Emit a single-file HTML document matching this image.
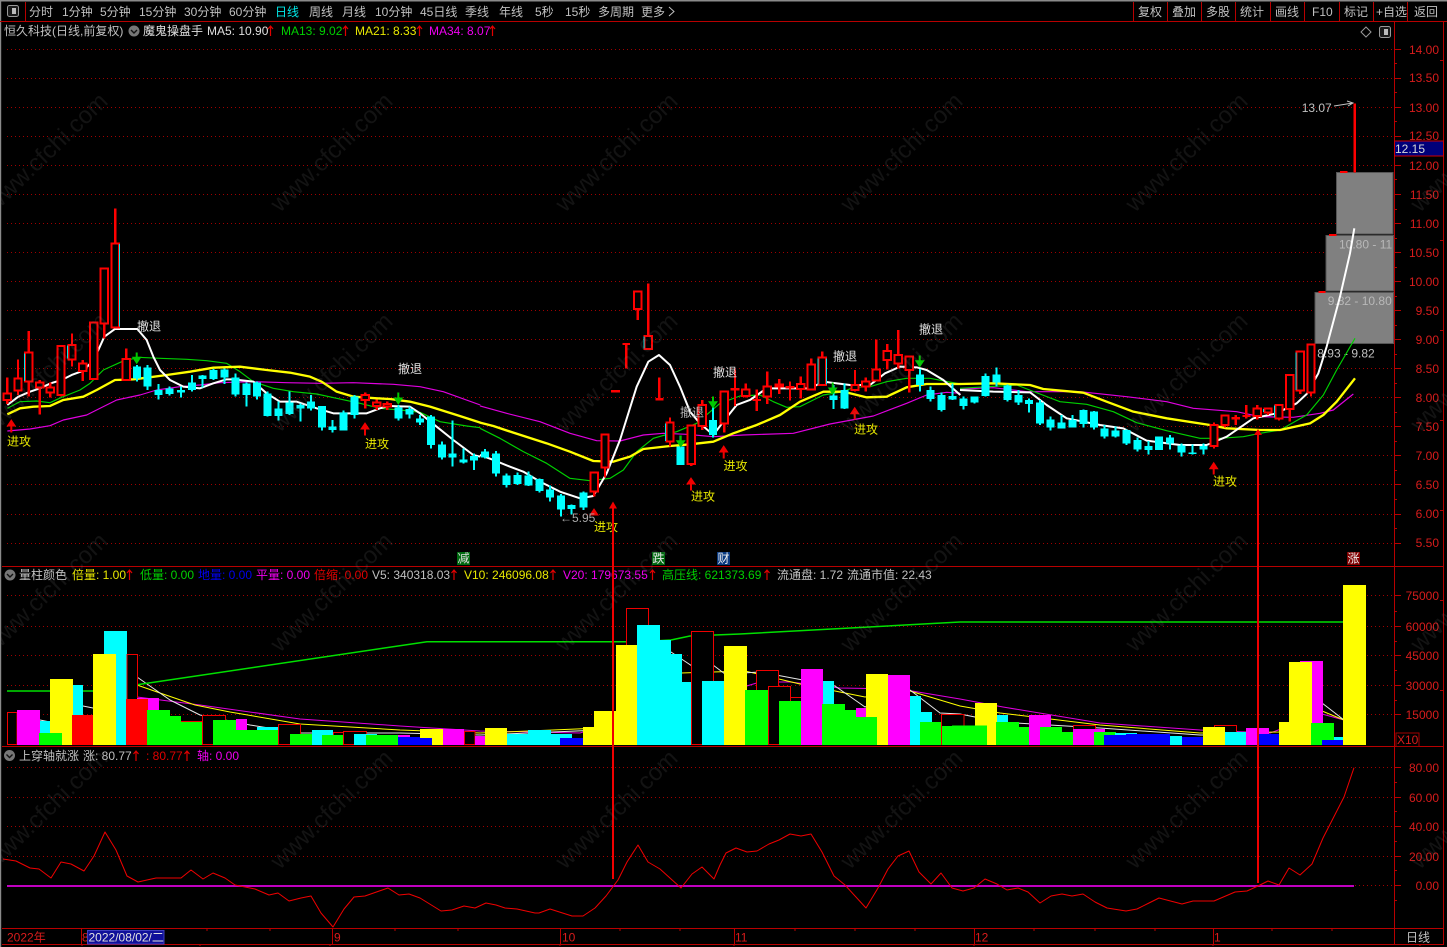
<!DOCTYPE html>
<html lang="zh"><head><meta charset="utf-8"><title>恒久科技 日线</title>
<style>
html,body{margin:0;padding:0;background:#000;width:1447px;height:947px;overflow:hidden}
svg{display:block}
text{font-family:"Liberation Sans","Noto Sans CJK SC",sans-serif;font-size:12px}
.g{fill:#c0c0c0}.w{fill:#e0e0e0}.y{fill:#e8e800}.gr{fill:#00d000}.m{fill:#f000f0}.b{fill:#0000f0}.r{fill:#e00000}.c{fill:#00e8e8}
.ax text,.ax{fill:#d81c1c}
.gd{stroke:#a00000;stroke-dasharray:1 3;fill:none;shape-rendering:crispEdges}
.fr{stroke:#b80000;fill:none;shape-rendering:crispEdges}
.cd path{shape-rendering:crispEdges}
.wk{fill:none;stroke:#00ffff;stroke-width:6}
.bd{fill:none;stroke:#00ffff;stroke-width:24}
.rw{fill:none;stroke:#ff0000;stroke-width:7}
.rb{fill:#000;stroke:#ff0000;stroke-width:6}
.ce{fill:none;stroke:#00e8e8;stroke-width:3}
.ln{fill:none;stroke-linejoin:round}
.bar path{shape-rendering:crispEdges}
.H{fill:#000;stroke:#f00000;stroke-width:1}.Y{fill:#ff0}.C{fill:#0ff}.M{fill:#f0f}.G{fill:#0f0}.B{fill:#00f}.R{fill:#f00}
.ar{fill:#f00000;stroke:#f00000;stroke-width:1}
.ga{fill:#00c800;stroke:#00c800;stroke-width:1}
.sa{stroke:#e00000;fill:none;stroke-width:1.2}
.wm{font-size:24px;fill:rgba(128,128,128,.15)}
</style></head><body>
<svg width="1447" height="947" viewBox="0 0 1447 947" xmlns="http://www.w3.org/2000/svg">
<rect width="1447" height="947" fill="#000"/>
<!-- frame -->
<rect x="0" y="0" width="1447" height="1.5" fill="#8a8a8a"/>
<rect x="0" y="0" width="1.2" height="947" fill="#8a8a8a"/>
<path class="fr" d="M0 21.5H1447M25.5 2V21M1133.5 2V21M1167.5 2V21M1201.5 2V21M1235.5 2V21M1270.5 2V21M1304.5 2V21M1339.5 2V21M1373.5 2V21M1407.5 2V21"/>
<path class="fr" stroke-width="1" d="M1394.5 21V944M1443.5 21V944M2 566.5H1444M2 746.5H1444M2 928.5H1444M2 944.5H1444"/>
<!-- toolbar -->
<rect x="7.5" y="5.5" width="11" height="11" rx="2" fill="#1a1a1a" stroke="#999"/><rect x="12" y="8" width="4" height="6" fill="#bbb"/>
<g class="g">
<text x="29" y="16">分时</text><text x="62" y="16">1分钟</text><text x="100" y="16">5分钟</text><text x="139" y="16">15分钟</text><text x="184" y="16">30分钟</text><text x="229" y="16">60分钟</text>
<text x="275" y="16" class="c">日线</text><text x="309" y="16">周线</text><text x="342" y="16">月线</text><text x="375" y="16">10分钟</text><text x="420" y="16">45日线</text><text x="465" y="16">季线</text><text x="499" y="16">年线</text><text x="535" y="16">5秒</text><text x="565" y="16">15秒</text><text x="598" y="16">多周期</text><text x="641" y="16">更多</text>
<text x="1138" y="16">复权</text><text x="1172" y="16">叠加</text><text x="1206" y="16">多股</text><text x="1240" y="16">统计</text><text x="1275" y="16">画线</text><text x="1312" y="16">F10</text><text x="1344" y="16">标记</text><text x="1376" y="16">+自选</text><text x="1414" y="16">返回</text>
</g>
<path d="M669 7l5 4.5-5 4.5" fill="none" stroke="#c0c0c0"/>
<!-- info row -->
<text x="4" y="35" class="g">恒久科技(日线,前复权)</text>
<circle cx="134" cy="31" r="5.5" fill="#777"/><path d="M131 30l3 3 3-3" fill="none" stroke="#111" stroke-width="1.4"/>
<text x="143" y="35" class="w">魔鬼操盘手</text>
<text x="207" y="35" class="w">MA5: 10.90</text><text x="281" y="35" class="gr">MA13: 9.02</text><text x="355" y="35" class="y">MA21: 8.33</text><text x="429" y="35" class="m">MA34: 8.07</text>
<path class="sa" d="M270.500 36V26M268 29l2.500-3 2.500 3M345.500 36V26M343 29l2.500-3 2.500 3M419.500 36V26M417 29l2.500-3 2.500 3M492.500 36V26M490 29l2.500-3 2.500 3"/>
<path d="M1366 27l5 5-5 5-5-5z" fill="none" stroke="#999"/>
<rect x="1379.500" y="26.500" width="11" height="11" rx="2" fill="#1a1a1a" stroke="#999"/><rect x="1384" y="29" width="4" height="6" fill="#bbb"/>
<!-- grids -->
<path class="gd" d="M7 49.500H1394M7 78.500H1394M7 107.500H1394M7 136.500H1394M7 165.500H1394M7 194.500H1394M7 223.500H1394M7 252.500H1394M7 281.500H1394M7 310.500H1394M7 339.500H1394M7 368.500H1394M7 397.500H1394M7 426.500H1394M7 455.500H1394M7 484.500H1394M7 514.500H1394M7 543.500H1394"/>
<path class="gd" d="M7 595.500H1394M7 626.500H1394M7 655.500H1394M7 685.500H1394M7 714.500H1394"/>
<path class="gd" d="M7 767.500H1394M7 797.500H1394M7 826.500H1394M7 856.500H1394M7 885.500H1394"/>
<!-- axis ticks -->
<path class="fr" d="M1394 49.500h7M1394 63.500h3M1394 78.500h7M1394 92.500h3M1394 107.500h7M1394 121.500h3M1394 136.500h7M1394 150.500h3M1394 165.500h7M1394 179.500h3M1394 194.500h7M1394 209.500h3M1394 223.500h7M1394 238.500h3M1394 252.500h7M1394 267.500h3M1394 281.500h7M1394 296.500h3M1394 310.500h7M1394 325.500h3M1394 339.500h7M1394 354.500h3M1394 368.500h7M1394 383.500h3M1394 397.500h7M1394 412.500h3M1394 426.500h7M1394 441.500h3M1394 455.500h7M1394 470.500h3M1394 484.500h7M1394 499.500h3M1394 514.500h7M1394 528.500h3M1394 543.500h7M1394 595.500h7M1394 611.500h3M1394 626.500h7M1394 641.500h3M1394 655.500h7M1394 670.500h3M1394 685.500h7M1394 700.500h3M1394 714.500h7M1394 767.500h7M1394 782.500h3M1394 797.500h7M1394 811.500h3M1394 826.500h7M1394 841.500h3M1394 856.500h7M1394 870.500h3M1394 885.500h7M1394 900.500h3M1440 60.500h3M1440 150.500h3M1440 240.500h3M1440 330.500h3M1440 420.500h3M1440 510.500h3M1440 600.500h3M1440 690.500h3"/>
<g class="ax" text-anchor="end">
<text x="1439" y="54">14.00</text><text x="1439" y="82">13.50</text><text x="1439" y="112">13.00</text><text x="1439" y="140">12.50</text><text x="1439" y="170">12.00</text><text x="1439" y="199">11.50</text><text x="1439" y="228">11.00</text><text x="1439" y="257">10.50</text><text x="1439" y="286">10.00</text><text x="1439" y="315">9.50</text><text x="1439" y="344">9.00</text><text x="1439" y="373">8.50</text><text x="1439" y="402">8.00</text><text x="1439" y="431">7.50</text><text x="1439" y="460">7.00</text><text x="1439" y="489">6.50</text><text x="1439" y="518">6.00</text><text x="1439" y="547">5.50</text>
<text x="1439" y="600">75000</text><text x="1439" y="631">60000</text><text x="1439" y="660">45000</text><text x="1439" y="690">30000</text><text x="1439" y="719">15000</text>
<text x="1439" y="772">80.00</text><text x="1439" y="802">60.00</text><text x="1439" y="831">40.00</text><text x="1439" y="861">20.00</text><text x="1439" y="890">0.00</text>
</g>
<rect x="1394.500" y="141" width="49" height="15" fill="#00007a" stroke="#d00000"/>
<text x="1395" y="153" fill="#d8d8d8">12.15</text>
<rect x="1396" y="733" width="23" height="13.500" fill="#000" stroke="#a00000"/><text x="1397" y="744" class="ax">X10</text>
<!-- gray boxes -->
<rect x="1315" y="292.500" width="78.500" height="51" fill="#808080" stroke="#555"/>
<rect x="1326" y="235.500" width="67.500" height="55.500" fill="#808080" stroke="#555"/>
<rect x="1336.500" y="172.500" width="56.500" height="61.500" fill="#808080" stroke="#555"/>
<text x="1339" y="248.500" fill="#b8b8b8">10.80 - 11</text>
<text x="1327.700" y="305" fill="#b8b8b8">9.82 - 10.80</text>
<text x="1317.300" y="357.500" class="g">8.93 - 9.82</text>
<!-- MA lines -->
<g class="ln" transform="translate(0,200) scale(.33333)">
<polyline stroke="#e000e0" stroke-width="3.500" fill="none" points="22,693 90,687 150,677 190,660 260,645 310,620 350,600 420,585 470,570 540,560 600,555 660,548 760,545 860,548 960,550 1060,548 1180,553 1260,560 1330,575 1441,615"/>
<polyline stroke="#00d000" stroke-width="3.500" fill="none" points="22,625 60,605 110,603 150,608 185,592 240,570 270,550 310,510 365,485 415,472 480,475 560,478 620,482 680,490 720,515 760,545 820,565 880,575 950,582 1010,595 1080,610 1140,625 1200,630 1260,637 1320,665 1400,678 1441,683"/>
<polyline stroke="#ffff00" stroke-width="7" fill="none" points="22,643 60,625 100,620 150,618 190,600 250,590 290,570 345,540 400,538 440,533 500,525 570,515 640,503 720,500 800,510 870,518 930,530 965,545 1010,575 1060,590 1130,595 1170,597 1230,605 1290,620 1370,645 1441,668"/>
<polyline stroke="#ffffff" stroke-width="6" fill="none" points="22,615 55,590 90,575 120,565 152,550 185,540 215,525 250,512 281,480 295,450 313,410 345,387 412,387 440,420 460,470 480,510 510,540 550,560 600,565 640,550 680,538 700,538 760,545 800,580 840,605 890,605 950,625 1000,640 1030,640 1100,640 1140,625 1165,618 1230,620 1260,640 1310,680 1360,720 1420,765 1441,770"/>
</g>
<g class="ln" transform="translate(480,270) scale(.33333)">
<polyline stroke="#e000e0" stroke-width="3.500" fill="none" points="0,408 80,430 180,455 270,490 350,512 420,513 490,495 550,490 620,493 700,500 790,495 940,490 1050,462 1180,438 1280,400 1340,375 1400,367 1441,370"/>
<polyline stroke="#00d000" stroke-width="3.500" fill="none" points="0,475 60,505 130,545 200,580 270,625 330,632 390,625 430,600 470,545 520,505 590,485 650,460 720,400 780,378 840,375 880,395 920,412 960,410 1030,375 1090,365 1120,352 1170,350 1220,335 1280,325 1350,325 1441,342"/>
<polyline stroke="#ffff00" stroke-width="7" fill="none" points="0,458 40,468 100,488 200,520 270,545 340,573 400,575 450,560 490,537 570,528 630,523 700,515 760,490 830,465 900,435 960,395 1030,365 1090,365 1160,382 1220,380 1280,352 1340,342 1441,342"/>
<polyline stroke="#ffffff" stroke-width="6" fill="none" points="0,555 40,570 90,590 130,605 180,635 240,665 300,685 340,678 380,610 420,510 470,350 505,275 537,255 570,285 600,350 630,425 660,460 700,495 730,455 770,405 810,390 860,355 900,355 990,355 1030,335 1110,345 1170,345 1215,310 1260,290 1310,292 1340,300 1390,330 1441,375"/>
</g>
<g class="ln" transform="translate(960,90) scale(.33333)">
<polyline stroke="#e000e0" stroke-width="3.500" fill="none" points="0,897 100,893 200,905 360,905 500,920 620,935 700,955 830,965 900,980 1000,982 1080,970 1120,960 1180,912"/>
<polyline stroke="#00d000" stroke-width="3.500" fill="none" points="0,895 170,885 240,912 300,935 380,943 460,965 530,998 620,1022 720,1045 780,1045 850,1040 900,1030 960,1020 1040,975 1090,915 1130,840 1185,745"/>
<polyline stroke="#ffff00" stroke-width="7" fill="none" points="0,882 100,880 210,885 250,897 370,908 440,935 520,965 620,985 750,1005 800,1015 900,1020 960,1020 1050,1000 1090,975 1130,935 1185,865"/>
<polyline stroke="#ffffff" stroke-width="6" fill="none" points="0,900 100,905 210,907 260,945 320,985 420,1005 490,1015 560,1052 660,1065 740,1065 800,1040 880,985 950,970 1010,940 1040,912 1075,850 1100,770 1140,620 1170,490 1183,415"/>
</g>
<!-- candles -->
<g class="cd" transform="translate(0,200) scale(.33333)">
<path class="wk" d="M411 495V545M443 495V570M476 552V598M508 560V587M543 560V593M576 525V575M608 525V562M641 507V540M673 505V552M706 520V590M739 548V620M771 545V598M803 575V650M836 605V662M868 575V645M901 610V665M933 585V632M966 618V692M998 660V698M1031 632V692M1063 585V655M1196 615V662M1228 620V655M1260 645V675M1293 645V745M1326 725V778M1358 662V800M1390 745V790M1422 760V810"/>
<path class="bd" d="M411 500V535M443 502V560M476 570V585M508 565V582M543 570V578M576 548V570M608 527V537M641 510V537M673 508V532M706 532V583M739 550V585M771 548V590M803 580V648M836 625V648M868 608V642M901 615V625M933 605V625M966 618V683M998 680V690M1031 637V692M1063 590V645M1196 622V655M1228 627V643M1260 655V667M1293 650V735M1326 733V772M1358 760V772M1390 778V788M1422 768V782"/>
<path class="rw" d="M22 532V612M54 478V585M86 393V590M119 540V643M151 547V592M183 437V590M216 400V500M248 480V543M313 205V415M346 25V382M379 445V540M1096 578V625M1130 598V630M1162 605V630"/>
<path class="rb" d="M22 580m-11 0h22V600h-22zM54 535m-11 0h22V572h-22zM86 458m-11 0h22V545h-22zM119 548m-11 0h22V562h-22zM151 563m-11 0h22V578h-22zM183 438m-11 0h22V585h-22zM216 435m-11 0h22V478h-22zM248 490m-11 0h22V513h-22zM281 367m-11 0h22V537h-22zM313 205m-11 0h22V370h-22zM346 130m-11 0h22V382h-22zM379 477m-11 0h22V540h-22zM1096 585m-11 0h22V600h-22zM1130 608m-11 0h22V618h-22zM1162 612m-11 0h22V620h-22z"/>
<path class="ce" d="M86 460m-13 0V543M216 437m-13 0V476M346 132m13 0V380"/>
</g>
<g class="cd" transform="translate(480,270) scale(.33333)">
<path class="wk" d="M15 537V565M48 543V620M80 610V652M113 607V645M146 605V648M178 625V667M210 647V695M243 672V740M275 703V733M310 665V720M602 497V585M699 410V503M1060 345V417M1093 340V417M1320 297V365M1352 350V395M1385 368V424M1417 340V390"/>
<path class="bd" d="M15 545V562M48 550V610M80 617V645M113 615V642M146 617V647M178 627V663M210 658V682M243 677V718M275 705V717M310 668V712M602 530V585M699 450V495M1060 377V390M1093 360V415M1320 313V345M1352 360V387M1385 375V420M1417 378V388"/>
<path class="rw" d="M343 607V680M375 493V622M473 65V150M505 40V200M570 443V530M634 467V588M667 390V480M733 365V487M765 298V408M797 340V383M830 358V423M862 305V402M898 327V372M930 335V392M962 320V385M994 265V362M1027 245V347M1125 300V365M1157 322V365M1189 208V335M1222 222V298M1255 180V295M1288 260V368M439 222V295M538 322V390"/>
<path class="rw" stroke-width="5" d="M393 364H420M427 222H450M527 388H550M752 358H778M817 390H843M917 352H943"/>
<path class="rb" d="M343 607m-11 0h22V665h-22zM375 493m-11 0h22V592h-22zM473 65m-11 0h22V117h-22zM505 198m-11 0h22V237h-22zM570 458m-11 0h22V515h-22zM634 467m-11 0h22V582h-22zM667 405m-11 0h22V468h-22zM733 365m-11 0h22V460h-22zM797 358m-11 0h22V378h-22zM862 350m-11 0h22V380h-22zM898 343m-11 0h22V350h-22zM962 342m-11 0h22V357h-22zM994 283m-11 0h22V358h-22zM1027 263m-11 0h22V345h-22zM1125 345m-11 0h22V360h-22zM1157 335m-11 0h22V350h-22zM1189 298m-11 0h22V332h-22zM1222 243m-11 0h22V270h-22zM1255 255m-11 0h22V280h-22zM1288 260m-11 0h22V300h-22z"/>
<path class="ce" d="M505 200m-13 0V235M570 460m-13 0V513M1027 265m-13 0V343M1027 265m13 0V343"/>
</g>
<g class="cd" transform="translate(960,90) scale(.33333)">
<path class="wk" d="M10 920V958M44 920V940M77 850V920M110 832V890M142 883V935M175 900V945M207 925V968M240 930V1005M272 980V1022M305 975V1015M337 975V1013M370 958V1012M402 963V1018M434 1005V1045M467 1010V1042M500 1018V1065M532 1043V1085M565 1053V1094M630 1035V1078M664 1060V1100M697 1063V1093M730 1060V1093"/>
<path class="bd" d="M10 925V948M44 920V938M77 858V918M110 853V878M142 887V930M175 915V937M207 930V942M240 937V1000M272 988V1012M305 998V1015M337 990V1012M370 960V1002M402 965V1012M434 1015V1040M467 1022V1040M500 1020V1060M532 1050V1078M565 1068V1080M597 1040V1080M630 1043V1060M664 1067V1088M697 1088V1092M730 1068V1078"/>
<path class="rw" d="M762 997V1075M795 977V1012M827 975V1005M859 945V985M892 945V988M924 952V975M957 945V992M989 855V995M1021 785V912M1053 763V920M1184 40V247"/>
<path class="rw" stroke-width="5" d="M815 985H840M848 978H872M1075 606H1097M1107 435H1130M1140 246H1162"/>
<path class="rb" d="M762 1005m-11 0h22V1068h-22zM795 977m-11 0h22V1005h-22zM892 955m-11 0h22V978h-22zM924 955m-11 0h22V968h-22zM957 945m-11 0h22V985h-22zM989 855m-11 0h22V957h-22zM1021 785m-11 0h22V902h-22zM1053 763m-11 0h22V908h-22z"/>
<path class="ce" d="M924 957m-13 0V966M957 947m-13 0V983M1021 787m-13 0V900"/>
</g>
<!-- signals -->
<g class="y"><text x="7" y="445.500">进攻</text><text x="365" y="448">进攻</text><text x="594" y="531">进攻</text><text x="691" y="500.500">进攻</text><text x="723.500" y="470">进攻</text><text x="854" y="433.500">进攻</text><text x="1213" y="485.500">进攻</text></g>
<g class="w"><text x="137" y="330.500">撤退</text><text x="398" y="373">撤退</text><text x="713" y="376.500">撤退</text><text x="680" y="416.500" style="fill:#bbb">撤退</text><text x="833" y="360.500">撤退</text><text x="919" y="333.500">撤退</text></g>
<path class="ar" d="M11.300 420l-4 6h8zM10.800 425h1v7h-1zM365 423l-4 6h8zM364.500 428h1v7h-1zM594 509l-4 6h8zM691 478l-4 6h8zM690.500 483h1v7h-1zM723.700 446l-4 6h8zM723.200 451h1v7h-1zM854.700 407.700l-4 6h8zM854.200 412h1v7h-1zM1213.700 462.700l-4 6h8zM1213.200 467h1v7h-1z"/>
<path class="ga" d="M136.700 363.300l-4-6h8zM136.200 353h1v6h-1zM398.300 404l-4-6h8zM397.800 393h1v6h-1zM680.700 446.700l-4-6h8zM680.200 436h1v6h-1zM713 407.700l-4-6h8zM712.500 397h1v6h-1zM832.700 394l-4-6h8zM832.200 383h1v6h-1zM919.700 366.700l-4-6h8zM919.200 356h1v6h-1z"/>
<text x="560" y="522" fill="#a8a8a8">←5.95</text>
<text x="1301.700" y="112" fill="#c0c0c0">13.07</text>
<path d="M1334 106L1353 103M1347 101l6 2-5 3" fill="none" stroke="#c0c0c0"/>
<rect x="457" y="552" width="13" height="13" fill="#006a10"/><text x="457.500" y="562.500" fill="#ddd">减</text>
<rect x="652" y="552" width="13" height="13" fill="#006a10"/><text x="652.500" y="562.500" fill="#eee">跌</text>
<rect x="717" y="552" width="13" height="13" fill="#0a3a80"/><text x="717.500" y="562.500" fill="#eee">财</text>
<rect x="1347" y="552" width="13" height="13" fill="#800000"/><text x="1347.500" y="562.500" fill="#eee">涨</text>
<!-- panel 2 header -->
<circle cx="10" cy="575" r="5.500" fill="#777"/><path d="M7 574l3 3 3-3" fill="none" stroke="#111" stroke-width="1.400"/>
<text x="19" y="579" class="g">量柱颜色</text>
<text x="72" y="579" class="y">倍量: 1.00</text><text x="140" y="579" class="gr">低量: 0.00</text><text x="198" y="579" class="b">地量: 0.00</text><text x="256" y="579" class="m">平量: 0.00</text><text x="314" y="579" class="r">倍缩: 0.00</text>
<text x="372" y="579" class="g">V5: 340318.03</text><text x="464" y="579" class="y">V10: 246096.08</text><text x="563" y="579" class="m">V20: 179673.55</text><text x="662" y="579" class="gr">高压线: 621373.69</text>
<text x="777" y="579" class="g">流通盘: 1.72</text><text x="847" y="579" class="g">流通市值: 22.43</text>
<path class="sa" d="M129.500 580V570M127 573l2.500-3 2.500 3M454 580V570M451.500 573l2.500-3 2.500 3M553 580V570M550.500 573l2.500-3 2.500 3M652.500 580V570M650 573l2.500-3 2.500 3M767 580V570M764.500 573l2.500-3 2.500 3"/>
<!-- volume lines -->
<g fill="none" stroke-linejoin="round">
<polyline stroke="#e000e0" points="137,697 200,705 300,719 400,726 480,731 580,733 620,720 700,700 760,682 790,682 840,688 900,689 960,699 1003,707 1100,723 1200,730 1270,733 1322,714 1344,720"/>
<polyline stroke="#ffff00" points="137,685 160,693 195,705 230,712 300,724 400,730 480,733 600,728 671,672 681,673 745,671 800,684 865,697 910,691 960,706 1000,713 1100,725 1200,733 1280,732 1322,711 1344,720"/>
<polyline stroke="#e8e8e8" points="40,720 50,722 83,706 93,708 137,677 170,700 200,715 250,725 300,733 400,733 480,735 600,730 671,652 692,666 713,665 725,674 760,672 835,686 865,707 910,690 940,713 960,714 1000,722 1100,728 1200,735 1280,735 1322,703 1344,720"/>
<path stroke="#00e000" stroke-width="1.500" d="M7 691H93"/>
<polyline stroke="#00e000" stroke-width="1.500" points="137,684.700 427,641.700 640,641.700 671,640 690,636 740,634 960,622 1343,622"/>
</g>
<!-- volume bars -->
<g class="bar">
<path class="H" d="M7.500 712.500H17V744.500H7.500z"/><path class="C" d="M40 721H50V745H40z"/><path class="M" d="M17 710H40V745H17z"/><path class="Y" d="M50 679H73V745H50z"/><path class="G" d="M39 733H62V745H39z"/><path class="C" d="M73 685H83V745H73z"/><path class="R" d="M72 715H94V745H72z"/><path class="C" d="M104 631H127V745H104z"/><path class="Y" d="M93 654H116V745H93z"/><path class="H" d="M127 654.500H137.500V744.500H127z"/><path class="M" d="M137 698H159V745H137z"/><path class="R" d="M126 699H148V745H126z"/><path class="G" d="M147 710H170V745H147z"/><path class="G" d="M170 716H181V745H170z"/><path class="H" d="M181.500 721.500H203.500V744.500H181.500z"/><path class="G" d="M181 722H213V745H181z"/><path class="H" d="M202.500 715.500H225.500V744.500H202.500z"/><path class="M" d="M236 719H247V745H236z"/><path class="G" d="M213 720H236V745H213z"/><path class="G" d="M236 730H257V745H236z"/><path class="C" d="M257 727H279V745H257z"/><path class="G" d="M257 730H290V745H257z"/><path class="H" d="M278.500 724.500H300.500V744.500H278.500z"/><path class="G" d="M290 734H312V745H290z"/><path class="C" d="M312 730H333V745H312z"/><path class="H" d="M333.500 732.500H344.500V744.500H333.500z"/><path class="G" d="M322 735H344V745H322z"/><path class="H" d="M343.500 731.500H366.500V744.500H343.500z"/><path class="C" d="M354 734H377V745H354z"/><path class="M" d="M388 735H410V745H388z"/><path class="G" d="M366 735H398V745H366z"/><path class="Y" d="M420 729H443V745H420z"/><path class="B" d="M398 737H420V745H398z"/><path class="B" d="M420 738H432V745H420z"/><path class="M" d="M443 729H464V745H443z"/><path class="H" d="M464.500 731.500H475V744.500H464.500z"/><path class="M" d="M475 736H485V745H475z"/><path class="Y" d="M485 728H507V745H485z"/><path class="C" d="M507 734H528V745H507z"/><path class="C" d="M528 730H551V745H528z"/><path class="C" d="M551 734H572V745H551z"/><path class="B" d="M560 738H583V745H560z"/><path class="Y" d="M583 727H594V745H583z"/><path class="Y" d="M594 711H616V745H594z"/><path class="H" d="M626.500 608.500H648.500V744.500H626.500z"/><path class="Y" d="M616 645H638V745H616z"/><path class="C" d="M637 625H660V745H637z"/><path class="C" d="M660 640H671V745H660z"/><path class="C" d="M671 654H682V745H671z"/><path class="C" d="M682 682H692V745H682z"/><path class="H" d="M691.500 631.500H713.500V744.500H691.500z"/><path class="C" d="M702 681H724V745H702z"/><path class="Y" d="M724 646H747V745H724z"/><path class="H" d="M756.500 670.500H778.500V744.500H756.500z"/><path class="G" d="M745 690H768V745H745z"/><path class="H" d="M768.500 686.500H790.500V744.500H768.500z"/><path class="H" d="M790.500 697.500H801.500V744.500H790.500z"/><path class="G" d="M779 701H802V745H779z"/><path class="C" d="M823 681H834V745H823z"/><path class="M" d="M801 669H823V745H801z"/><path class="G" d="M822 704H845V745H822z"/><path class="G" d="M845 710H856V745H845z"/><path class="M" d="M856 708H866V745H856z"/><path class="Y" d="M866 674H888V745H866z"/><path class="G" d="M856 717H877V745H856z"/><path class="M" d="M888 675H910V745H888z"/><path class="C" d="M910 696H921V745H910z"/><path class="C" d="M921 712H932V745H921z"/><path class="G" d="M920 722H942V745H920z"/><path class="H" d="M941.500 714.500H964V744.500H941.500z"/><path class="G" d="M942 726H952V745H942z"/><path class="Y" d="M975 703H997V745H975z"/><path class="G" d="M952 725.500H987V745H952z"/><path class="C" d="M997 715H1008V745H997z"/><path class="G" d="M996 722H1019V745H996z"/><path class="G" d="M1019 727H1029V745H1019z"/><path class="M" d="M1029 715H1051V745H1029z"/><path class="G" d="M1040 727H1062V745H1040z"/><path class="G" d="M1062 732H1073V745H1062z"/><path class="H" d="M1073.500 725.500H1095.500V744.500H1073.500z"/><path class="M" d="M1073 729H1095V745H1073z"/><path class="M" d="M1095 729H1105V745H1095z"/><path class="G" d="M1094 732H1116V745H1094z"/><path class="C" d="M1115 733H1137V745H1115z"/><path class="B" d="M1104 735H1126V745H1104z"/><path class="B" d="M1126 734H1170V745H1126z"/><path class="C" d="M1170 736H1182V745H1170z"/><path class="B" d="M1182 737H1203V745H1182z"/><path class="H" d="M1214.500 725.500H1236.500V744.500H1214.500z"/><path class="Y" d="M1203 727H1225V745H1203z"/><path class="C" d="M1225 732H1247V745H1225z"/><path class="M" d="M1246 728H1269V745H1246z"/><path class="B" d="M1258 734H1280V745H1258z"/><path class="Y" d="M1279 722H1289V745H1279z"/><path class="M" d="M1300 661H1323V745H1300z"/><path class="Y" d="M1289 662H1312V745H1289z"/><path class="G" d="M1311 723H1334V745H1311z"/><path class="C" d="M1334 737H1344V745H1334z"/><path class="B" d="M1322 740H1344V745H1322z"/><path class="Y" d="M1343 585H1366V745H1343z"/>
</g>
<!-- panel 3 -->
<circle cx="9.500" cy="755.500" r="5.500" fill="#777"/><path d="M6.500 754.500l3 3 3-3" fill="none" stroke="#111" stroke-width="1.400"/>
<text x="19" y="760" class="g">上穿轴就涨</text><text x="83" y="760" class="g">涨: 80.77</text><text x="146" y="760" class="r">: 80.77</text><text x="197" y="760" class="m">轴: 0.00</text>
<path class="sa" d="M136 761V751M133.500 754l2.500-3 2.500 3M187 761V751M184.500 754l2.500-3 2.500 3"/>
<rect x="7" y="885" width="1347" height="2" fill="#c000c0"/>
<polyline fill="none" stroke="#f00000" stroke-linejoin="round" points="3,859 16,861 30,868 39,869 51,878 61,862 71,864 84,871 94,856 105,832 116,850 127,876 138,882 156,878 181,878 191,870 203,879 213,873 225,878 235,885 255,889 269,895 278,893 289,901 301,898 311,896 321,913 333,927 344,909 354,897 365,896 388,888 399,895 409,894 420,898 441,911 452,910 464,906 475,908 486,903 496,905 505,908 517,909 535,913 539,913 550,909 572,916 583,916 595,908 606,896 618,880 627,862 638,845 648,862 660,869 681,888 692,874 702,867 714,879 720,865 726,853 736,848 747,852 757,851 769,844 779,840 790,834 801,836 811,834 822,852 834,876 845,885 866,908 878,888 888,869 898,856 909,851 919,872 931,884 941,873 952,888 963,891 974,888 985,879 997,884 1007,890 1018,888 1028,892 1040,903 1051,896 1062,894 1072,896 1083,894 1095,902 1107,908 1126,911 1137,909 1149,903 1159,898 1182,904 1193,901 1214,901 1235,892 1247,891 1258,886 1268,881 1279,885 1289,868 1300,875 1312,864 1323,838 1344,797 1354,767.700"/>
<!-- long signal arrows -->
<path d="M613 508V879M1258 434V883" stroke="#f00000" stroke-width="2" fill="none"/>
<path d="M613 501.500l-4 7h8zM1258 429l-4 6h8z" fill="#f00000"/>
<!-- bottom axis -->
<path class="fr" d="M81.500 929V944M332.500 929V944M560.500 929V944M734.500 929V944M974.500 929V944M1213.500 929V944M207 929v2M270 929v2M395 929v2M458 929v2M620 929v2M680 929v2M795 929v2M855 929v2M915 929v2M1034 929v2M1095 929v2M1155 929v2M1272 929v2M1332 929v2M82 944v2M200 944v2M330 944v2M560 944v2M734 944v2M974 944v2M1213 944v2M1420 944v2"/>
<g class="ax"><text x="7" y="941.500">2022年</text><text x="82" y="941.500">8</text><text x="334" y="941.500">9</text><text x="562" y="941.500">10</text><text x="735" y="941.500">11</text><text x="975" y="941.500">12</text><text x="1214" y="941.500">1</text></g>
<rect x="87.500" y="930.500" width="76.500" height="13.500" fill="#10109a" stroke="#4040c0"/>
<text x="88.500" y="941.500" fill="#e0e0e0">2022/08/02/二</text>
<text x="1406" y="941.500" class="g">日线</text>
<!-- watermark -->
<g class="wm" text-anchor="middle">
<text class="wm" transform="translate(52,158) rotate(-44)">www.cfchi.com</text><text class="wm" transform="translate(337,158) rotate(-44)">www.cfchi.com</text><text class="wm" transform="translate(622,158) rotate(-44)">www.cfchi.com</text><text class="wm" transform="translate(907,158) rotate(-44)">www.cfchi.com</text><text class="wm" transform="translate(1192,158) rotate(-44)">www.cfchi.com</text><text class="wm" transform="translate(1477,158) rotate(-44)">www.cfchi.com</text>
<text class="wm" transform="translate(52,378) rotate(-44)">www.cfchi.com</text><text class="wm" transform="translate(337,378) rotate(-44)">www.cfchi.com</text><text class="wm" transform="translate(622,378) rotate(-44)">www.cfchi.com</text><text class="wm" transform="translate(907,378) rotate(-44)">www.cfchi.com</text><text class="wm" transform="translate(1192,378) rotate(-44)">www.cfchi.com</text><text class="wm" transform="translate(1477,378) rotate(-44)">www.cfchi.com</text>
<text class="wm" transform="translate(52,598) rotate(-44)">www.cfchi.com</text><text class="wm" transform="translate(337,598) rotate(-44)">www.cfchi.com</text><text class="wm" transform="translate(622,598) rotate(-44)">www.cfchi.com</text><text class="wm" transform="translate(907,598) rotate(-44)">www.cfchi.com</text><text class="wm" transform="translate(1192,598) rotate(-44)">www.cfchi.com</text><text class="wm" transform="translate(1477,598) rotate(-44)">www.cfchi.com</text>
<text class="wm" transform="translate(52,815) rotate(-44)">www.cfchi.com</text><text class="wm" transform="translate(337,815) rotate(-44)">www.cfchi.com</text><text class="wm" transform="translate(622,815) rotate(-44)">www.cfchi.com</text><text class="wm" transform="translate(907,815) rotate(-44)">www.cfchi.com</text><text class="wm" transform="translate(1192,815) rotate(-44)">www.cfchi.com</text><text class="wm" transform="translate(1477,815) rotate(-44)">www.cfchi.com</text>
</g>
</svg>
</body></html>
